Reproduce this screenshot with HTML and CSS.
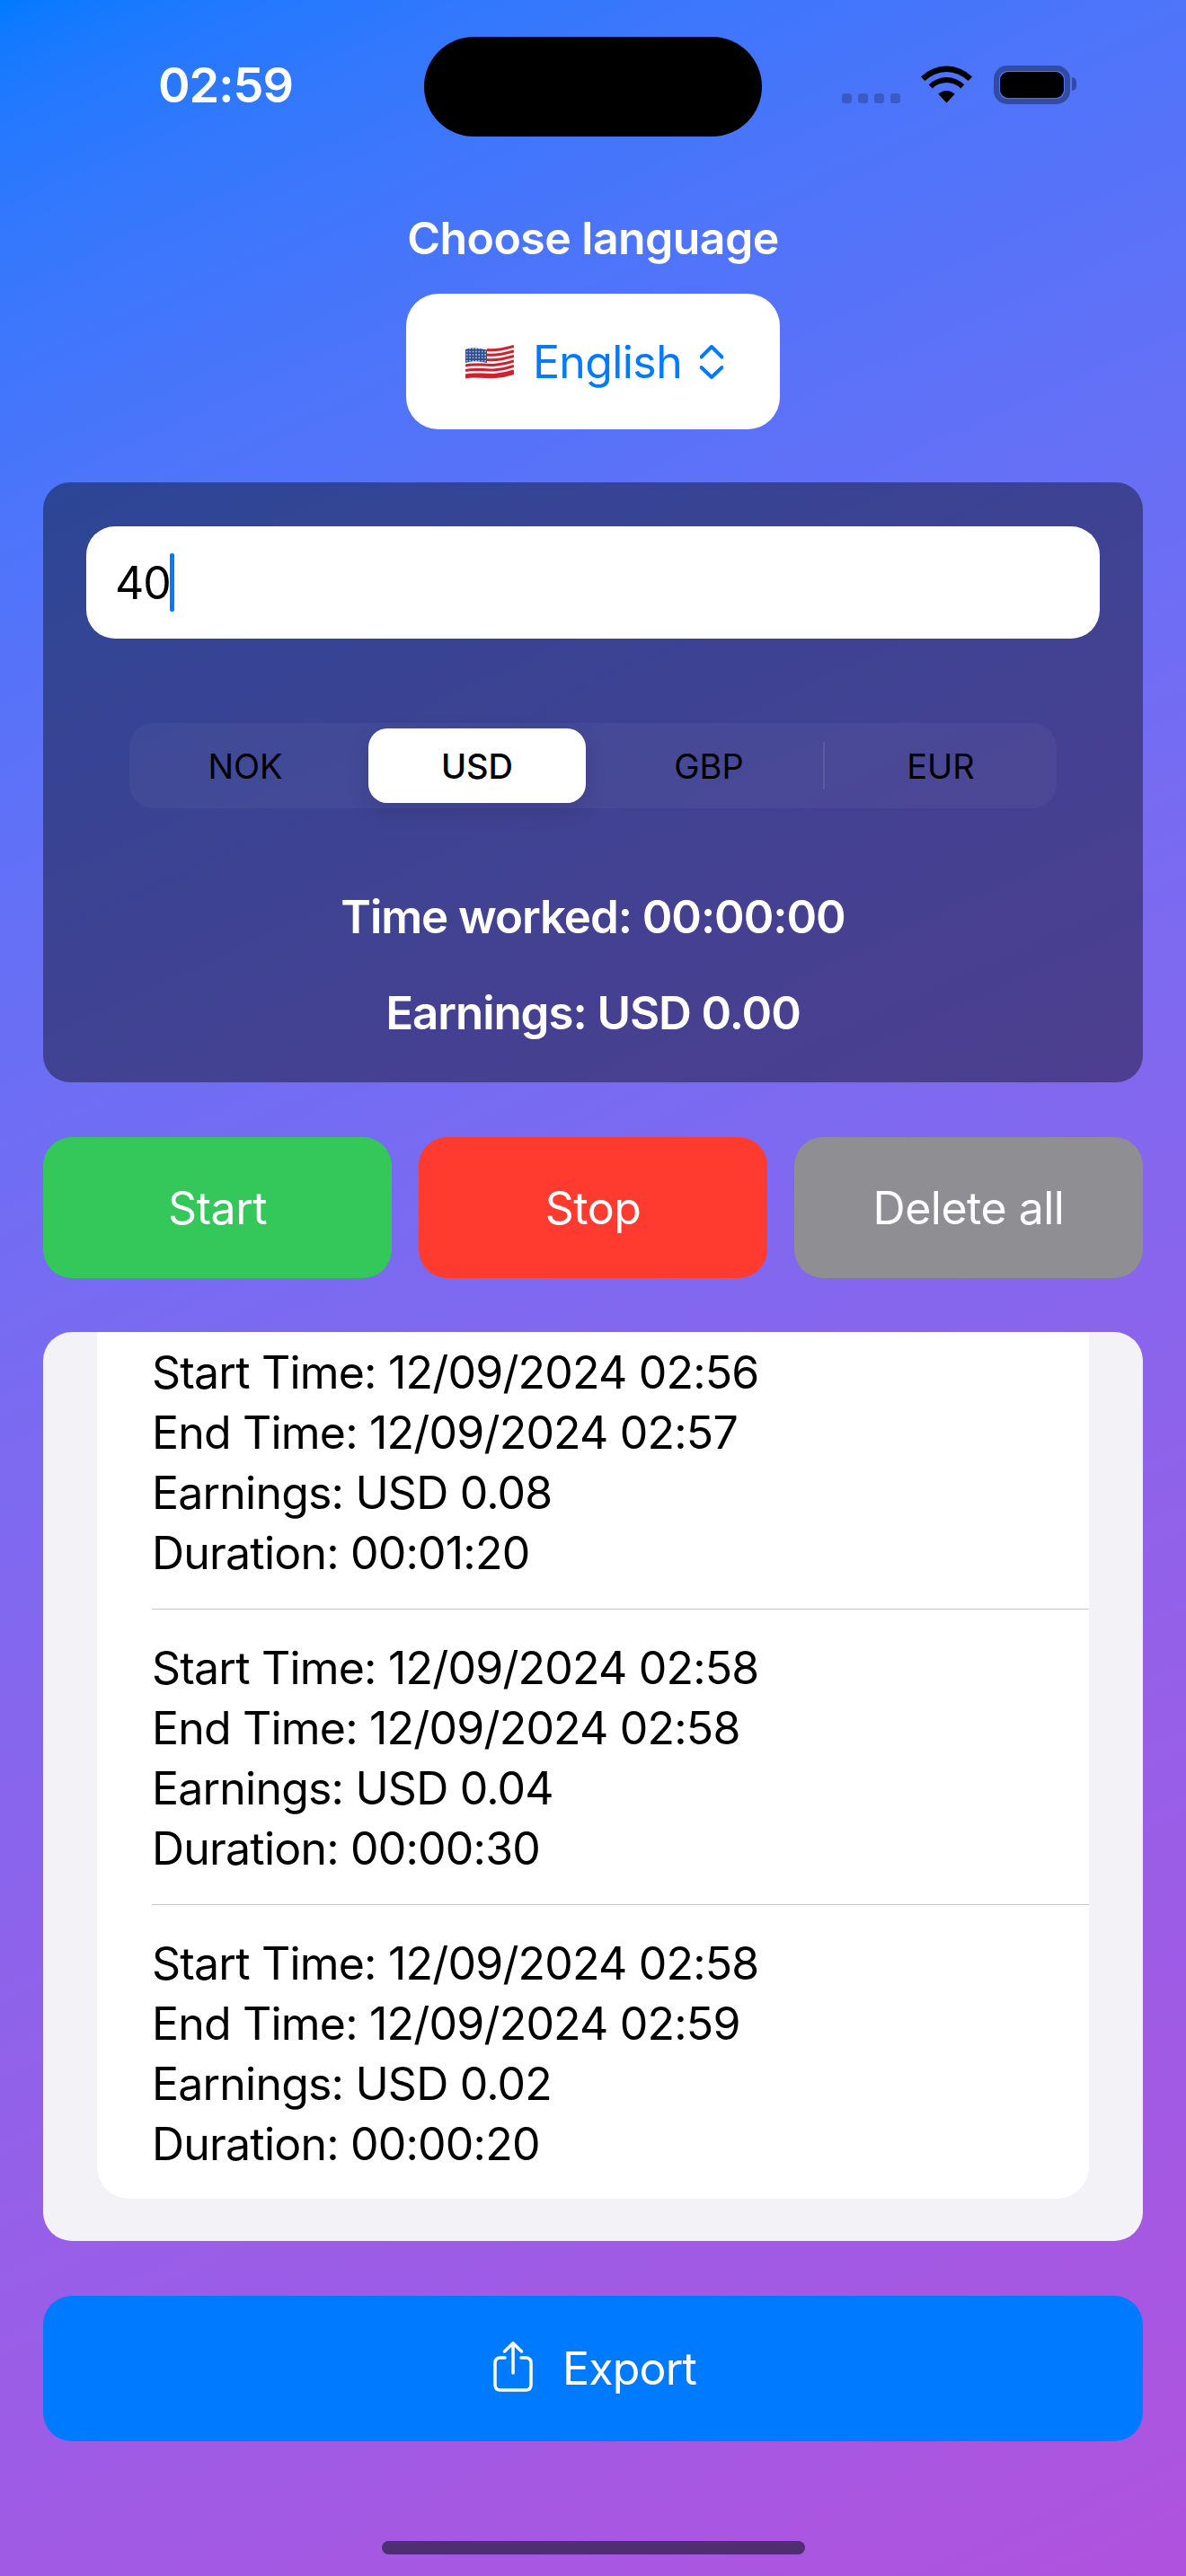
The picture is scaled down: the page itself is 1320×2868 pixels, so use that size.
FILE: index.html
```html
<!DOCTYPE html>
<html lang="en">
<head>
<meta charset="utf-8">
<title>Earnings timer</title>
<link rel="stylesheet" href="styles.css">
</head>
<body>
<div class="screen">
  <header class="status">
    <div class="status-left"><span class="time">02:59</span></div>
    <div class="island"></div>
    <div class="status-right">
      <div class="dots"><i></i><i></i><i></i><i></i></div>
      <svg class="wifi" viewBox="0 0 57 42" width="57" height="42">
        <path d="M-.1 12.4A40.5 40.5 0 0 1 57.1 12.4L52.5 17A34 34 0 0 0 4.5 17Z"/>
        <path d="M8.7 21.2A28 28 0 0 1 48.3 21.2L44.1 25.4A22 22 0 0 0 12.9 25.4Z"/>
        <path d="M19.3 31.8A13 13 0 0 1 37.7 31.8L28.5 41.5Z"/>
      </svg>
      <div class="battery"><div class="battery-level"></div></div>
      <div class="battery-cap"></div>
    </div>
  </header>

  <main class="content">
    <div class="lang-label">Choose language</div>
    <div class="picker">
      <svg class="flag" viewBox="0 0 54 40" width="54" height="40">
        <defs>
          <pattern id="stars" width="3.4" height="3.4" patternUnits="userSpaceOnUse">
            <circle cx="1.7" cy="1.7" r=".8" fill="#dfe6f2"/>
          </pattern>
        </defs>
        <path d="M0 6C14 1 24 12 54 1V33C30 43 14 32 0 38Z" fill="#f4f4f6"/>
        <g fill="none" stroke="#d0202e" stroke-width="3">
          <path d="M24 6.5C32 7.5 42 6 54 2.5"/>
          <path d="M24 12C32 13 42 11.5 54 8"/>
          <path d="M24 17.500C32 18.500 42 17 54 13.500"/>
          <path d="M0 24C14 20 28 28 54 19"/>
          <path d="M0 29.500C14 25.500 28 33.500 54 24.500"/>
          <path d="M0 35C14 31 28 39 54 30"/>
          <path d="M0 37C14 33.500 28 41 54 32.500"/>
        </g>
        <path d="M0 6C8 3.500 14 4.500 24 6.500V21C14 18.500 8 18.500 0 21Z" fill="#2b4c8f"/>
        <path d="M0 6C8 3.500 14 4.500 24 6.500V21C14 18.500 8 18.500 0 21Z" fill="url(#stars)"/>
      </svg>
      <span class="picker-text">English</span>
      <svg class="updown" viewBox="0 0 26 38" width="26" height="38">
        <path d="M1.500 13.500L13 2L24.500 13.500M1.500 25L13 36L24.500 25"/>
      </svg>
    </div>

    <section class="card">
      <div class="input">40<span class="caret"></span></div>
      <div class="segments">
        <div class="seg">NOK</div>
        <div class="seg seg-on">USD</div>
        <div class="seg seg-div">GBP</div>
        <div class="seg">EUR</div>
      </div>
      <div class="metric metric-time">Time worked: 00:00:00</div>
      <div class="metric metric-earn">Earnings: USD 0.00</div>
    </section>

    <div class="actions">
      <div class="btn btn-start">Start</div>
      <div class="btn btn-stop">Stop</div>
      <div class="btn btn-delete">Delete all</div>
    </div>

    <section class="list">
      <div class="list-inner">
        <div class="row row-first">
          <div class="line">Start Time: 12/09/2024 02:56</div>
          <div class="line">End Time: 12/09/2024 02:57</div>
          <div class="line">Earnings: USD 0.08</div>
          <div class="line">Duration: 00:01:20</div>
        </div>
        <div class="row">
          <div class="line">Start Time: 12/09/2024 02:58</div>
          <div class="line">End Time: 12/09/2024 02:58</div>
          <div class="line">Earnings: USD 0.04</div>
          <div class="line">Duration: 00:00:30</div>
        </div>
        <div class="row row-last">
          <div class="line">Start Time: 12/09/2024 02:58</div>
          <div class="line">End Time: 12/09/2024 02:59</div>
          <div class="line">Earnings: USD 0.02</div>
          <div class="line">Duration: 00:00:20</div>
        </div>
      </div>
    </section>

    <div class="export">
      <svg class="share" viewBox="0 0 44 56" width="44" height="56">
        <path d="M13 18H8Q2 18 2 24V48Q2 54 8 54H36Q42 54 42 48V24Q42 18 36 18H31M22 35V2M12.500 11L22 1.800L31.500 11"/>
      </svg>
      <span>Export</span>
    </div>
  </main>
  <div class="home"></div>
</div>
</body>
</html>
```

FILE: styles.css
```css
* { box-sizing: border-box; }
html, body { margin: 0; padding: 0; }
body { font-family: Inter, "Liberation Sans", sans-serif; }

.screen {
  width: 1320px;
  height: 2868px;
  overflow: hidden;
  background: linear-gradient(155.3deg in srgb-linear, #007aff, #af52de);
}

/* status bar */
.status { display: flex; height: 152px; padding-top: 41px; }
.status-left { width: 472px; height: 111px; padding-left: 30px; display: flex; align-items: center; justify-content: center; }
.time { color: #fff; font-size: 54px; font-weight: 600; letter-spacing: -1px; line-height: 60px; margin-top: -3px; }
.island { width: 376px; height: 111px; background: #000; border-radius: 56px; }
.status-right { display: flex; align-items: flex-end; height: 74px; padding-left: 89px; }
.dots { display: flex; gap: 7px; margin-right: 23px; }
.dots i { width: 11px; height: 11px; border-radius: 3px; background: rgba(0, 0, 0, .22); }
.wifi { fill: #000; margin-right: 24px; overflow: visible; }
.battery { width: 85px; height: 43px; border: 6px solid rgba(0, 0, 0, .35); border-radius: 15px; padding: 1px; margin-bottom: -1px; }
.battery-level { width: 100%; height: 100%; background: #000; border-radius: 9px; }
.battery-cap { width: 5px; height: 15px; margin: 0 0 14px 2px; background: rgba(0, 0, 0, .35); border-radius: 0 8px 8px 0; }

.content { padding: 0 48px; display: flex; flex-direction: column; align-items: stretch; }

.lang-label { margin-top: 83px; text-align: center; color: #fff; font-size: 50px; font-weight: 600; line-height: 60px; letter-spacing: -.55px; }
.picker {
  align-self: center; width: 416px; height: 151px; margin-top: 32px; padding-left: 3px;
  background: #fff; border-radius: 36px;
  display: flex; align-items: center; justify-content: center; gap: 21px;
}
.picker-text { color: #007aff; font-size: 50px; line-height: 60px; letter-spacing: -.6px; }
.updown { margin-left: -1px; fill: none; stroke: #007aff; stroke-width: 4; stroke-linecap: round; stroke-linejoin: round; }

.card {
  margin-top: 59px; height: 668px; padding: 49px 48px 0;
  background: rgba(0, 0, 0, .4); border-radius: 30px;
  display: flex; flex-direction: column;
}
.input {
  height: 125px; background: #fff; border-radius: 32px; padding-left: 32px;
  display: flex; align-items: center; color: #000; font-size: 50px; letter-spacing: -1px;
}
.caret { width: 5px; height: 65px; background: #007aff; margin-left: -1px; border-radius: 2px; }

.segments {
  margin: 94px 48px 0; height: 95px; padding: 6px 0;
  display: grid; grid-template-columns: repeat(4, 1fr);
  background: rgba(255, 255, 255, .04); border-radius: 27px;
}
.seg { position: relative; margin: 0 8px; display: flex; align-items: center; justify-content: center; color: #000; font-size: 38px; font-weight: 400; }
.seg-on { background: #fff; border-radius: 21px; font-weight: 500; box-shadow: 0 9px 24px rgba(0, 0, 0, .12); }
.seg-div::after { content: ""; position: absolute; right: -8px; top: 15px; bottom: 15px; width: 2px; background: rgba(255, 255, 255, .1); }

.metric { color: #fff; text-align: center; font-size: 51px; font-weight: 600; line-height: 60px; letter-spacing: -1.05px; }
.metric-time { margin-top: 91px; }
.metric-earn { margin-top: 47px; }

.actions { margin-top: 61px; height: 157px; display: grid; grid-template-columns: repeat(3, 1fr); gap: 30px; }
.btn { border-radius: 32px; color: #fff; font-size: 50px; letter-spacing: -.5px; display: flex; align-items: center; justify-content: center; }
.btn-start { background: #34c759; }
.btn-stop { background: #ff3b30; }
.btn-delete { background: #8e8e93; }

.list { margin-top: 60px; height: 1012px; padding: 0 60px; background: #f2f2f7; border-radius: 32px; overflow: hidden; }
.list-inner { height: 965px; padding-left: 61px; background: #fff; border-radius: 0 0 36px 36px; }
.row { height: 329px; padding-top: 32px; border-bottom: 1px solid #c6c6c8; }
.row-first { height: 309px; padding-top: 12px; }
.row-last { border-bottom: 0; }
.line { font-size: 50px; line-height: 67px; color: #000; letter-spacing: -.8px; white-space: nowrap; }

.export {
  margin-top: 61px; height: 162px; padding-left: 4px; background: #007aff; border-radius: 32px;
  display: flex; align-items: center; justify-content: center; gap: 33px;
  color: #fff; font-size: 50px; letter-spacing: -.8px;
}
.share { fill: none; stroke: #fff; stroke-width: 3.5; stroke-linecap: round; stroke-linejoin: round; margin-top: -4px; }

.home { width: 471px; height: 15px; margin: 111px auto 0; border-radius: 8px; background: rgba(20, 20, 40, .6); }
```
